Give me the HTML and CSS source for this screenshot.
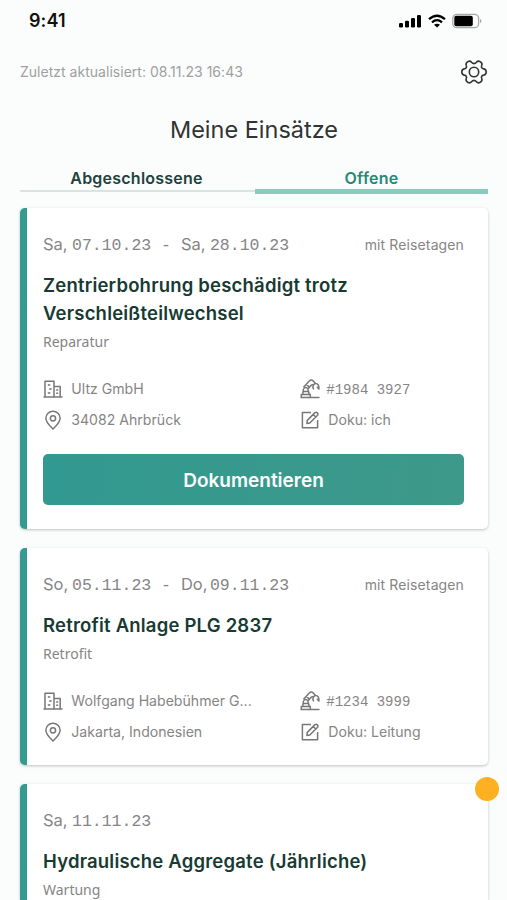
FILE: index.html
```html
<!DOCTYPE html>
<html lang="de">
<head>
<meta charset="utf-8">
<title>Meine Einsätze</title>
<link rel="stylesheet" href="styles.css">
</head>
<body>
<svg class="sprite" aria-hidden="true">
  <symbol id="building" viewBox="0 0 20 20"><path d="M2 17.700V2.200h9v15.500M11 7.400h6.200v10.300M.5 17.900h19M4.800 6h2.500M6.200 10h2.500M4.800 14h2.500M13.200 11h2M13.200 14.300h2"/></symbol>
  <symbol id="pin" viewBox="0 0 20 20"><path d="M10 18.900C6.900 15.900 2.900 12.800 2.900 8.300a7.100 7.100 0 0 1 14.200 0c0 4.500-4 7.600-7.100 10.600z"/><circle cx="10" cy="8.300" r="2.600"/></symbol>
  <symbol id="robot" viewBox="0 0 20 20"><path d="M.5 18.600h19M1.300 18.300v-2.700h9v2.700M2.700 15.300L3.500 9.800M9.300 15.300L7.700 10M3.300 12.600h5M3.500 8.200L9.300 2M7.700 10l4.300-4.600M6.300 5.400l3.200 2.700"/><path d="M3.500 9.800a2.300 2.300 0 0 1 4.200 0M9.300 2c1-1.200 2.800-1.200 4 0l1.900 2.200-1.700 1.900-1.500-.7M15.200 4.200c2.700.3 4.200 2.300 3.600 5.800l-1.900-2.400M13.500 6.100c-1 1.600-.8 2.900.3 4.300"/></symbol>
  <symbol id="edit" viewBox="0 0 20 20"><path d="M11 2.600H2.400v15.200h15.200V10M6.900 13.400l.4-3 7.400-7.500q1.300-1.200 2.600 0t0 2.600l-7.500 7.500zM13.200 4.500l2.500 2.500"/></symbol>
</svg>
<div class="status">
  <span class="clock">9:41</span>
  <div class="signals">
    <svg width="23" height="14" viewBox="0 0 23 14"><rect x="0" y="9" width="4" height="4.500" rx="1.200"/><rect x="6" y="6.800" width="4" height="6.700" rx="1.200"/><rect x="12" y="4" width="4" height="9.500" rx="1.200"/><rect x="18" y="1" width="4" height="12.500" rx="1.200"/></svg>
    <svg width="18" height="14" viewBox="0 0 18 14"><path d="M1 5.200Q9-1.800 17 5.200M4 8.300Q9 4 14 8.300" fill="none" stroke="#000" stroke-width="2.300"/><path d="M6 10.700Q9 8.600 12 10.700L9 13.600z"/></svg>
    <svg width="30" height="16" viewBox="0 0 30 16"><rect x=".8" y="1.300" width="25.800" height="13.400" rx="4" fill="none" stroke="#aaa" stroke-width="1.300"/><rect x="2.300" y="2.800" width="18.500" height="10.400" rx="2"/><path d="M28 5.700q3 2.300 0 4.600z" fill="#aaa"/></svg>
  </div>
</div>
<header class="top">
  <span class="updated">Zuletzt aktualisiert: 08.11.23 16:43</span>
  <svg class="gear" viewBox="0 0 26 26"><path d="M10.500 3.200Q13 6 15.500 3.200Q17 1.300 19.200 2.700Q21.600 4 20.800 6.200Q19.500 9.400 22.800 9.900Q25.200 10.400 25.200 13Q25.200 15.600 22.800 16.100Q19.500 16.600 20.800 19.800Q21.600 22 19.200 23.300Q17 24.700 15.500 22.800Q13 20 10.500 22.800Q9 24.700 6.800 23.300Q4.400 22 5.200 19.800Q6.500 16.600 3.200 16.100Q.8 15.600 .8 13Q.8 10.400 3.200 9.900Q6.500 9.400 5.200 6.200Q4.400 4 6.800 2.700Q9 1.300 10.500 3.200z"/><circle cx="13" cy="13" r="4.700"/></svg>
</header>
<h1 class="title">Meine Einsätze</h1>
<nav class="tabs"><a class="tab">Abgeschlossene</a><a class="tab active">Offene</a></nav>
<main class="list">
  <article class="card">
    <div class="when"><div class="date"><span class="day">Sa,</span><span>07.10.23 - </span><span class="day">Sa,</span><span>28.10.23</span></div><span class="travel">mit Reisetagen</span></div>
    <h2 class="name">Zentrierbohrung beschädigt trotz Verschleißteilwechsel</h2>
    <div class="kind">Reparatur</div>
    <div class="facts">
      <div class="fact"><svg class="icon"><use href="#building"/></svg><span>Ultz GmbH</span></div>
      <div class="fact"><svg class="icon"><use href="#robot"/></svg><span class="serial">#1984 3927</span></div>
      <div class="fact"><svg class="icon"><use href="#pin"/></svg><span>34082 Ahrbrück</span></div>
      <div class="fact"><svg class="icon"><use href="#edit"/></svg><span>Doku: ich</span></div>
    </div>
    <button class="action">Dokumentieren</button>
  </article>
  <article class="card medium">
    <div class="when"><div class="date"><span class="day">So,</span><span>05.11.23 - </span><span class="day">Do,</span><span>09.11.23</span></div><span class="travel">mit Reisetagen</span></div>
    <h2 class="name">Retrofit Anlage PLG 2837</h2>
    <div class="kind">Retrofit</div>
    <div class="facts">
      <div class="fact"><svg class="icon"><use href="#building"/></svg><span>Wolfgang Habebühmer G...</span></div>
      <div class="fact"><svg class="icon"><use href="#robot"/></svg><span class="serial">#1234 3999</span></div>
      <div class="fact"><svg class="icon"><use href="#pin"/></svg><span>Jakarta, Indonesien</span></div>
      <div class="fact"><svg class="icon"><use href="#edit"/></svg><span>Doku: Leitung</span></div>
    </div>
  </article>
  <article class="card last">
    <span class="badge"></span>
    <div class="when"><div class="date"><span class="day">Sa,</span><span>11.11.23</span></div></div>
    <h2 class="name">Hydraulische Aggregate (Jährliche)</h2>
    <div class="kind">Wartung</div>
  </article>
</main>
</body>
</html>
```
FILE: styles.css
```css
* { box-sizing: border-box; }
body { margin: 0; height: 900px; overflow: hidden; padding: 0 19px 0 20px; background: #fbfdfc; color: #858585; font-family: Inter, sans-serif; }
.sprite { display: none; }
.status { height: 41px; display: flex; align-items: center; justify-content: space-between; padding: 0 6px 0 9px; color: #111; }
.clock { font-size: 18px; font-weight: 600; letter-spacing: .1px; }
.signals { display: flex; align-items: center; gap: 6px; }
.top { height: 61px; display: flex; align-items: center; justify-content: space-between; }
.updated { font-size: 14px; letter-spacing: .02px; color: #a0a0a0; }
.gear { width: 26px; height: 26px; margin-right: 1px; fill: none; stroke: #333; stroke-width: 1.6; }
.title { margin: 0; height: 54px; line-height: 55px; text-align: center; font-size: 23.5px; font-weight: 400; color: #303434; }
.tabs { height: 38px; display: flex; }
.tab { flex: 1; height: 36px; padding: 12px 2px 0 0; line-height: 20px; text-align: center; font-size: 16px; font-weight: 600; letter-spacing: .23px; color: #21423c; border-bottom: 2px solid #d8e4e2; }
.tab.active { height: 38px; padding-right: 0; color: #288777; border-bottom: 5px solid #8bcabe; }
.list { margin-top: 14px; display: flex; flex-direction: column; gap: 19px; }
.card { position: relative; height: 321px; padding: 22px 24px 0 16px; border-left: 7px solid #339b92; border-radius: 5px; background: #fff; box-shadow: 0 1px 3px rgba(0,0,0,.24); }
.card.medium { height: 217px; }
.card.last { height: 116px; border-radius: 5px 5px 0 0; }
.when { height: 28px; display: flex; align-items: center; justify-content: space-between; }
.date { display: flex; align-items: baseline; font: 16.5px "Liberation Mono", monospace; white-space: pre; }
.day { width: 29px; font-family: Inter, sans-serif; }
.travel { font-size: 14px; letter-spacing: .12px; }
.name { margin: 13px 0 0; line-height: 28px; font-size: 18.5px; font-weight: 600; letter-spacing: .2px; color: #173b32; }
.kind { margin-top: 4px; font: 14px/22px "Noto Sans", sans-serif; }
.facts { margin-top: 20px; display: grid; grid-template-columns: 257px 1fr; grid-auto-rows: 31px; }
.fact { display: flex; align-items: center; gap: 8px; font-size: 14.1px; white-space: nowrap; }
.icon { width: 20px; height: 20px; margin-right: .3px; fill: none; stroke: #777; stroke-width: 1.5; stroke-linejoin: round; }
.serial { margin: 2px 0 0 -2px; font: 14px "Liberation Mono", monospace; }
.action { display: block; width: 421px; height: 51px; margin-top: 19px; padding: 1px 0 0; border: 0; border-radius: 5px; background: linear-gradient(100deg, #329991, #3d9989); color: #fff; font: 600 19px Inter, sans-serif; }
.badge { position: absolute; top: -7px; right: -11px; width: 24px; height: 24px; border-radius: 50%; background: #fdb022; }
```
